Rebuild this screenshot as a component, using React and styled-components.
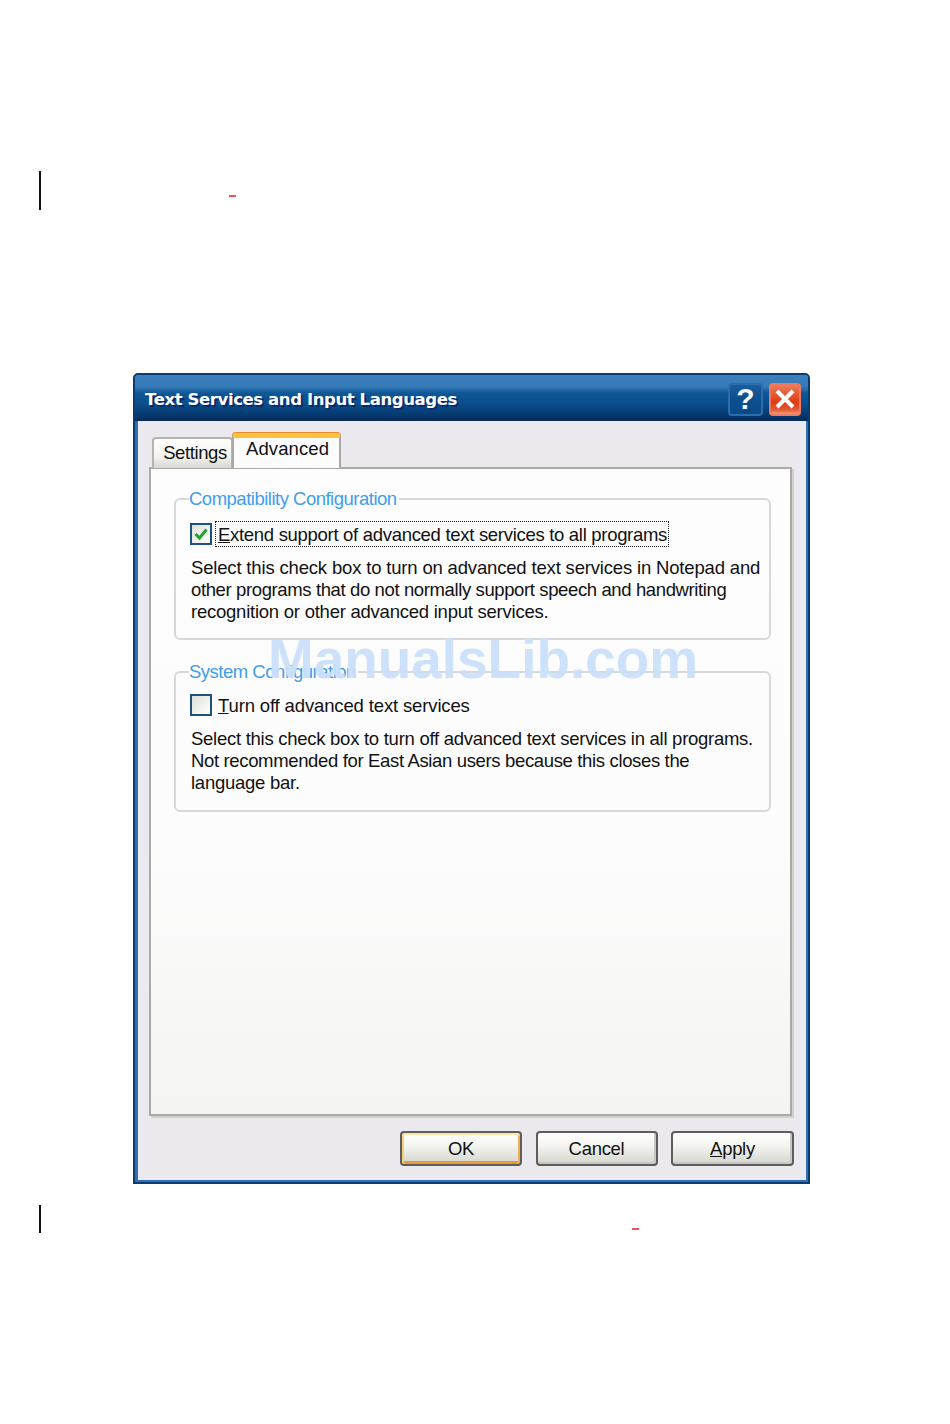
import React from 'react';
import styled, { createGlobalStyle } from 'styled-components';

const GlobalStyle = createGlobalStyle`
  html, body {
    margin: 0;
    background: #fff;
  }
`;

const Page = styled.div`
  position: relative;
  box-sizing: border-box;
  width: 950px;
  height: 1424px;
  padding: 373px 0 0 133px;
  overflow: hidden;
  background: #fff;
  font-family: 'Liberation Sans', Arial, sans-serif;
`;

const CropBar = styled.div`
  position: absolute;
  left: 39px;
  top: ${({ $top }) => $top}px;
  width: 2px;
  height: ${({ $height }) => $height}px;
  background: #111;
`;

const RedDash = styled.div`
  position: absolute;
  left: ${({ $left }) => $left}px;
  top: ${({ $top }) => $top}px;
  width: 7px;
  height: 2px;
  background: #f0545a;
`;

const Watermark = styled.div`
  position: absolute;
  left: 268px;
  top: 628px;
  font-size: 54.9px;
  line-height: 62px;
  font-weight: 700;
  color: #cbe0fb;
  opacity: 0.95;
  white-space: nowrap;
`;

const Dialog = styled.div`
  box-sizing: border-box;
  display: flex;
  flex-direction: column;
  width: 677px;
  height: 811px;
  background: #2e70b4;
  border: 2px solid #0a3a6e;
  border-radius: 5px 5px 0 0;
  overflow: hidden;
`;

const TitleBar = styled.div`
  box-sizing: border-box;
  display: flex;
  align-items: center;
  height: 46px;
  flex: none;
  padding: 2px 7px 0 10px;
  background: linear-gradient(
    to bottom,
    #3b80bd 0,
    #3579b6 12px,
    #0f5796 18px,
    #0a4f8d 28px,
    #06396e 40px,
    #032a56 46px
  );
`;

const Title = styled.div`
  flex: 1;
  color: #fff;
  font-family: 'DejaVu Sans', Verdana, sans-serif;
  font-size: 16.5px;
  font-weight: 700;
  letter-spacing: -0.4px;
  text-shadow: 2px 2px 0 #0a2a70;
  white-space: nowrap;
`;

const CaptionButton = styled.div`
  box-sizing: border-box;
  display: flex;
  align-items: center;
  justify-content: center;
  width: ${({ $w }) => $w}px;
  height: 33px;
  margin-left: ${({ $gap }) => $gap}px;
  border-radius: 4px;
  color: #f4f8fc;
  font-size: 30px;
  font-weight: 700;
  border: 2px solid ${({ $close }) => ($close ? '#f07a5c' : '#2c6dae')};
  background: ${({ $close }) =>
    $close
      ? 'linear-gradient(to bottom, #ee7e5c 0, #e65a34 30%, #de3c14 60%, #e25a38 85%, #f29a82 100%)'
      : 'linear-gradient(to bottom, #1a5c9c 0, #0c4f8e 50%, #0b4a88 100%)'};
`;

const Body = styled.div`
  box-sizing: border-box;
  flex: 1;
  display: flex;
  flex-direction: column;
  margin: 0 2px 2px 3px;
  padding: 12px 12px 0 11px;
  background: #ebe9ed;
`;

const TabRow = styled.div`
  display: flex;
  align-items: flex-end;
  height: 35px;
  padding-left: 3px;
  margin-bottom: -1px;
  position: relative;
  z-index: 1;
`;

const Tab = styled.div`
  box-sizing: border-box;
  display: flex;
  align-items: center;
  justify-content: center;
  color: #111;
  font-size: 18.5px;
  white-space: nowrap;
  border-radius: 4px 4px 0 0;
  ${({ $active }) =>
    $active
      ? `
    width: 109px;
    height: 35px;
    margin-left: -1px;
    padding: 0 0 9px 2px;
    letter-spacing: 0.1px;
    background: #fcfcfe;
    border: 2px solid #a9a9a5;
    border-bottom: 0;
    border-top: 5px solid #fdc23c;
    box-shadow: 0 -1px 0 #e68b2c;
  `
      : `
    width: 81px;
    height: 31px;
    padding: 0 0 2px 5px;
    letter-spacing: -0.4px;
    background: linear-gradient(to bottom, #fff, #f3f3ef 60%, #d8d8d2);
    border: 2px solid #b4b4ae;
    border-bottom: 0;
  `}
`;

const Panel = styled.div`
  box-sizing: border-box;
  display: flex;
  flex-direction: column;
  gap: 21px;
  width: 643px;
  height: 649px;
  flex: none;
  padding: 19px 19px 0 23px;
  background: linear-gradient(to bottom, #fdfdfd, #fcfcfc 60%, #f4f4f2);
  border: 2px solid #a9a9a5;
  box-shadow: 2px 2px 0 #d0d0ce;
`;

const Group = styled.fieldset`
  box-sizing: border-box;
  height: ${({ $height }) => $height}px;
  margin: 0;
  min-width: 0;
  padding: ${({ $top }) => $top}px 8px 0 14px;
  border: 2px solid #d8d8da;
  border-radius: 6px;
`;

const Legend = styled.legend`
  padding: 0 2px 0 0;
  margin-left: -1px;
  color: #3f9dea;
  font-size: 18.5px;
  letter-spacing: -0.5px;
  line-height: 22px;
  white-space: nowrap;
`;

const CheckRow = styled.div`
  display: flex;
  align-items: center;
  height: 25px;
`;

const Box = styled.div`
  box-sizing: border-box;
  display: flex;
  align-items: center;
  justify-content: center;
  width: 22px;
  height: 22px;
  flex: none;
  border: 2px solid #1c5180;
  background: linear-gradient(135deg, #dfdfd8, #f6f6f3 70%, #fff);
`;

const Label = styled.span`
  margin-left: 4px;
  padding: 2px 1px 0 2px;
  color: #111;
  font-size: 18.5px;
  letter-spacing: ${({ $spacing }) => $spacing}px;
  line-height: 22px;
  white-space: nowrap;
  outline: ${({ $focus }) => ($focus ? '1.5px dotted #222' : 'none')};
`;

const Mnemonic = styled.span`
  text-decoration: underline;
`;

const Description = styled.div`
  margin: 11px 0 0 1px;
  color: #111;
  font-size: 18.5px;
  line-height: 22px;
  white-space: nowrap;
`;

const Line = styled.div`
  letter-spacing: ${({ $spacing }) => $spacing}px;
`;

const ButtonRow = styled.div`
  display: flex;
  justify-content: flex-end;
  gap: 13.5px;
  margin-top: 15px;
`;

const Button = styled.div`
  box-sizing: border-box;
  display: flex;
  align-items: center;
  justify-content: center;
  width: ${({ $w }) => $w}px;
  height: 35px;
  color: #111;
  font-size: 18.5px;
  letter-spacing: -0.3px;
  border: 2px solid #5d5d5d;
  border-radius: 4px;
  background: linear-gradient(to bottom, #fff, #f4f4f0 40%, #d6d6d0);
  box-shadow: ${({ $primary }) =>
    $primary
      ? 'inset 0 2px 0 #fbe6a8, inset 2px 0 0 #f6cf78, inset -2px 0 0 #f0b050, inset 0 -3px 0 #e99a34'
      : 'inset -2px -2px 0 #c8c8c2'};
`;

const App = () => (
  <Page>
    <GlobalStyle />
    <CropBar $top={171} $height={39} />
    <RedDash $left={229} $top={195} />
    <CropBar $top={1205} $height={28} />
    <RedDash $left={632} $top={1228} />

    <Dialog>
      <TitleBar>
        <Title>Text Services and Input Languages</Title>
        <CaptionButton $w={35}>?</CaptionButton>
        <CaptionButton $w={32} $gap={6} $close>
          <svg width="22" height="22" viewBox="0 0 22 22">
            <path d="M3 3 L19 19 M19 3 L3 19" stroke="#fff" strokeWidth="4" />
          </svg>
        </CaptionButton>
      </TitleBar>
      <Body>
        <TabRow>
          <Tab>Settings</Tab>
          <Tab $active>Advanced</Tab>
        </TabRow>
        <Panel>
          <Group $height={152} $top={11}>
            <Legend>Compatibility Configuration</Legend>
            <CheckRow>
              <Box>
                <svg width="16" height="16" viewBox="0 0 16 16">
                  <path d="M2.5 8 L6.5 12 L13.5 3.5" fill="none" stroke="#22a52e" strokeWidth="3" />
                </svg>
              </Box>
              <Label $focus $spacing={-0.3}>
                <Mnemonic>E</Mnemonic>xtend support of advanced text services to all programs
              </Label>
            </CheckRow>
            <Description>
              <Line $spacing={-0.17}>Select this check box to turn on advanced text services in Notepad and</Line>
              <Line $spacing={-0.38}>other programs that do not normally support speech and handwriting</Line>
              <Line $spacing={-0.24}>recognition or other advanced input services.</Line>
            </Description>
          </Group>
          <Group $height={151} $top={9}>
            <Legend>System Configuration</Legend>
            <CheckRow>
              <Box />
              <Label $spacing={-0.14}>
                <Mnemonic>T</Mnemonic>urn off advanced text services
              </Label>
            </CheckRow>
            <Description>
              <Line $spacing={-0.27}>Select this check box to turn off advanced text services in all programs.</Line>
              <Line $spacing={-0.35}>Not recommended for East Asian users because this closes the</Line>
              <Line $spacing={-0.25}>language bar.</Line>
            </Description>
          </Group>
        </Panel>
        <ButtonRow>
          <Button $w={122} $primary>OK</Button>
          <Button $w={122}>Cancel</Button>
          <Button $w={123}>
            <span>
              <Mnemonic>A</Mnemonic>pply
            </span>
          </Button>
        </ButtonRow>
      </Body>
    </Dialog>
    <Watermark>ManualsLib.com</Watermark>
  </Page>
);

export default App;
